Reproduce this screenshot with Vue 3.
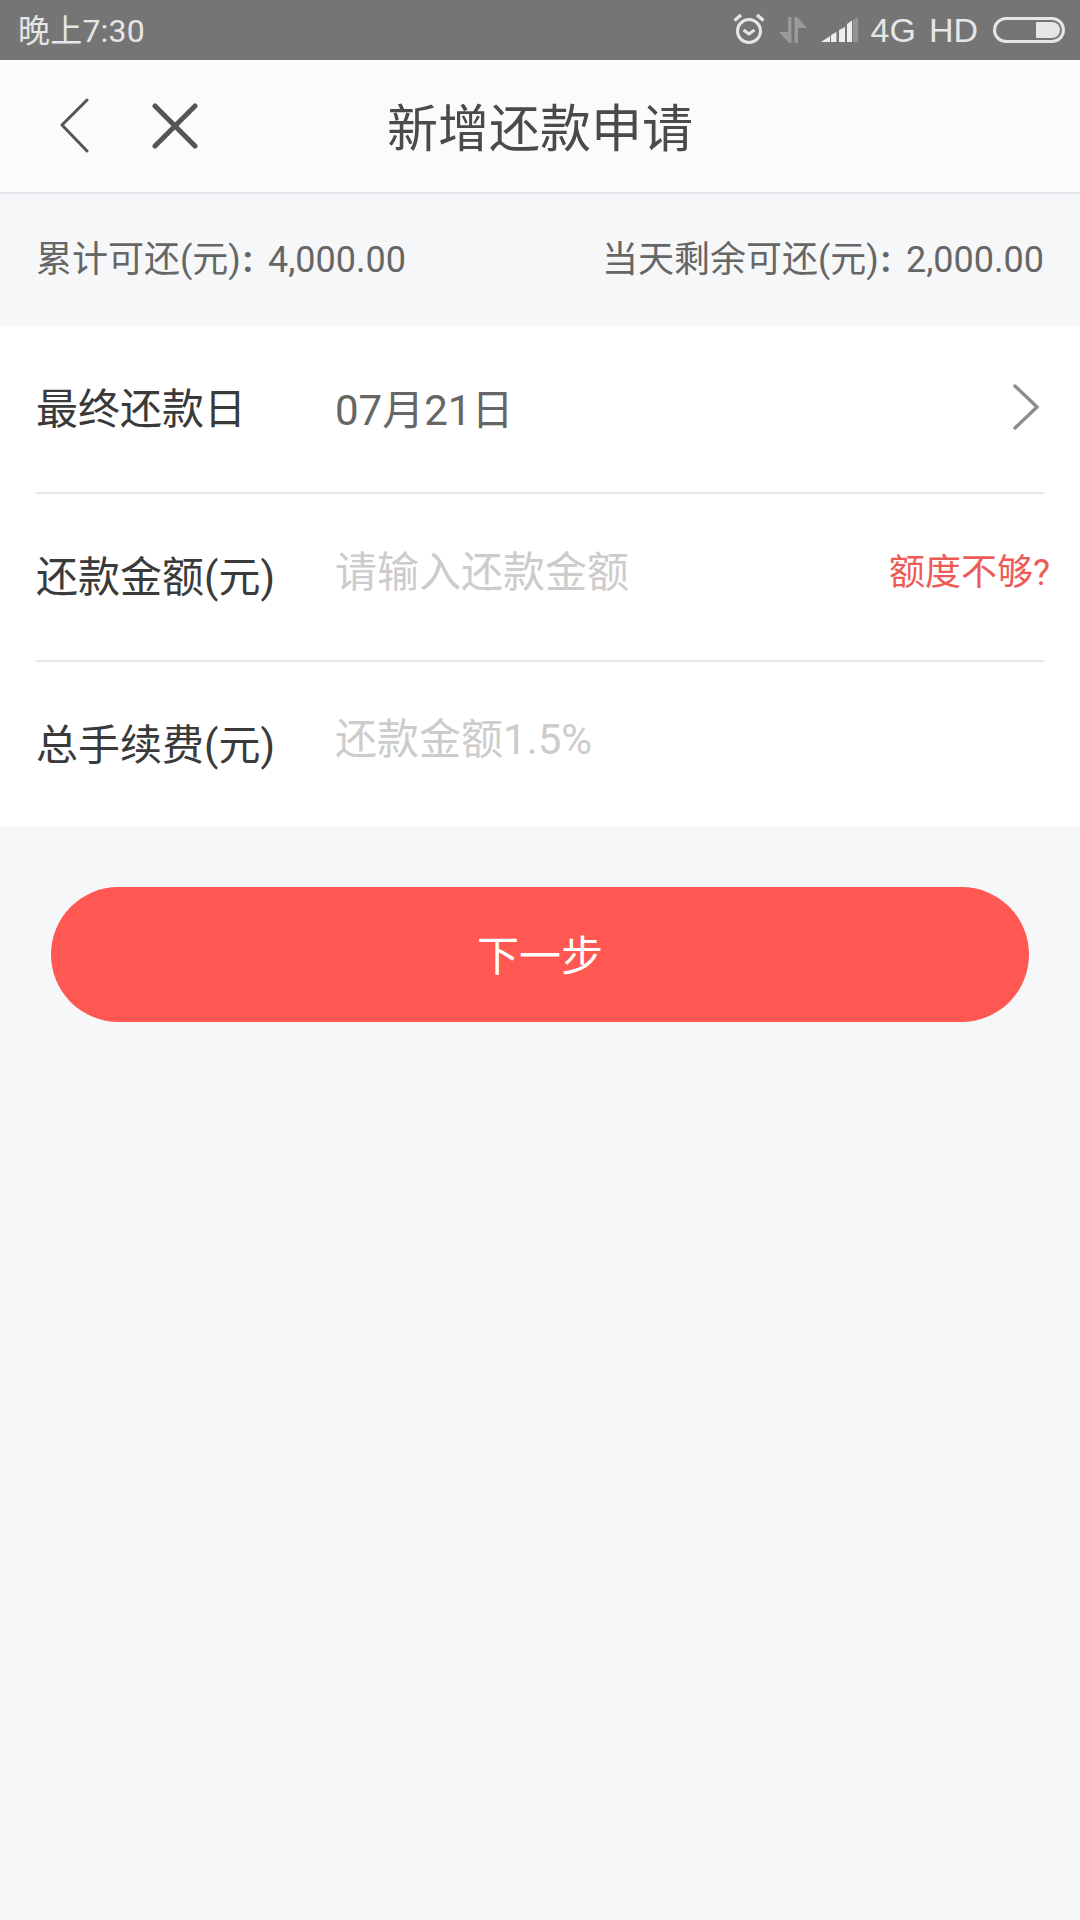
<template>
  <div class="page">
    <div class="status">
      <span class="time">晚上7:30</span>
      <div class="status-right">
        <svg class="alarm" width="32" height="32" viewBox="0 0 32 32" fill="none" stroke="#e6e6e6">
          <circle cx="16" cy="18" r="11.500" stroke-width="3" />
          <path d="M10.500 17l5.500 4 5.500-4" stroke-width="3" />
          <path d="M1.500 7.500L8 2M30.500 7.500L24 2" stroke-width="3.400" />
        </svg>
        <svg class="arrows" width="28" height="26" viewBox="0 0 28 26" fill="#9a9a9a">
          <path d="M9 0h3.500v26H10L0 15h9zM15.500 0H18l10 11h-9v15h-3.500z" />
        </svg>
        <svg class="signal" width="37" height="26" viewBox="0 0 37 26">
          <path d="M0 25l9-6v6zM10 18l5.500-3v10H10zM18 13l6-3v15h-6zM26 7l5-3.500V25h-5z" fill="#eee" />
          <path d="M32 3l5-3v25h-5z" fill="#949494" />
        </svg>
        <span class="net">4G</span>
        <span class="net hd">HD</span>
        <div class="battery"><div class="battery-fill"></div></div>
      </div>
    </div>
    <div class="nav">
      <svg class="back" width="30" height="56" viewBox="0 0 30 56" fill="none" stroke="#555" stroke-width="3" stroke-linecap="round" stroke-linejoin="round">
        <path d="M27 2L2 27l25 26" />
      </svg>
      <svg class="close" width="46" height="46" viewBox="0 0 46 46" fill="none" stroke="#555" stroke-width="5" stroke-linecap="round">
        <path d="M3 3l40 40M43 3L3 43" />
      </svg>
      <span class="title">新增还款申请</span>
    </div>
    <div class="summary">
      <span>累计可还(元)<i class="colon">:</i>4,000.00</span>
      <span>当天剩余可还(元)<i class="colon">:</i>2,000.00</span>
    </div>
    <div class="form">
      <div class="row">
        <span class="label">最终还款日</span>
        <span class="value">07月21日</span>
        <svg class="chev" width="26" height="46" viewBox="0 0 26 46" fill="none" stroke="#8e8e8e" stroke-width="3.500" stroke-linecap="round" stroke-linejoin="round">
          <path d="M2 2l22 21L2 44" />
        </svg>
      </div>
      <div class="row">
        <span class="label">还款金额(元)</span>
        <span class="hint">请输入还款金额</span>
        <span class="link">额度不够?</span>
      </div>
      <div class="row last">
        <span class="label">总手续费(元)</span>
        <span class="hint">还款金额1.5%</span>
      </div>
    </div>
    <div class="action">
      <div class="btn">下一步</div>
    </div>
  </div>
</template>

<script setup>
</script>

<style>
html, body { margin: 0; background: #f6f7f9; }
</style>

<style scoped>
.page {
  width: 1080px;
  height: 1920px;
  display: flex;
  flex-direction: column;
  background: #f6f7f9;
  overflow: hidden;
  font-family: Roboto, "Noto Sans CJK SC", sans-serif;
}
.status {
  height: 60px;
  background: #757575;
  display: flex;
  align-items: center;
  justify-content: space-between;
  padding: 0 15px 0 18px;
  box-sizing: border-box;
  color: #e6e6e6;
}
.time { font-size: 32px; letter-spacing: 0.2px; margin-top: -4px; }
.status-right { display: flex; align-items: center; }
.alarm { margin-right: 14px; margin-top: -2px; }
.arrows { margin-right: 14px; }
.signal { margin-right: 13px; }
.net { font-size: 34px; font-family: "Liberation Sans", sans-serif; line-height: 60px; }
.hd { margin-left: 13px; margin-right: 15px; }
.battery {
  width: 72px;
  height: 26px;
  border: 3px solid #e6e6e6;
  border-radius: 13px;
  box-sizing: border-box;
  display: flex;
  justify-content: flex-end;
  padding: 2px;
}
.battery-fill { width: 24px; background: #e6e6e6; border-radius: 1px 8px 8px 1px; }
.nav {
  height: 134px;
  background: #fbfbfb;
  border-bottom: 2px solid #e3e4e8;
  box-sizing: border-box;
  display: flex;
  align-items: center;
  position: relative;
  padding-left: 60px;
}
.back { margin-right: 62px; }
.title {
  position: absolute;
  left: 0;
  right: 0;
  padding-bottom: 2px;
  text-align: center;
  font-size: 51px;
  color: #4a4a4a;
}
.summary {
  height: 132px;
  padding: 0 36px 8px;
  box-sizing: border-box;
  display: flex;
  align-items: center;
  justify-content: space-between;
  font-size: 36px;
  color: #666;
}
.colon { font-style: normal; font-weight: 700; margin: 0 15px 0 2px; }
.form { background: #fff; padding: 0 36px; height: 501px; display: flex; flex-direction: column; }
.row {
  height: 168px;
  border-bottom: 2px solid #e8e8e8;
  box-sizing: border-box;
  display: flex;
  align-items: center;
  position: relative;
}
.row.last { border-bottom: 0; height: 165px; }
.label { width: 299px; font-size: 42px; color: #3a3a3a; flex: none; margin-top: -7px; }
.value { font-size: 42px; color: #666; flex: 1; margin-top: -6px; }
.hint { font-size: 42px; color: #ccc; flex: 1; margin-top: -18px; }
.link { position: absolute; right: -6px; font-size: 36px; color: #ee5b56; top: 49px; }
.chev { margin-right: 5px; margin-top: -4px; }
.action { padding: 60px 51px 0; }
.btn {
  height: 135px;
  padding-bottom: 4px;
  box-sizing: border-box;
  border-radius: 68px;
  background: #ff5751;
  color: #fff;
  font-size: 42px;
  display: flex;
  align-items: center;
  justify-content: center;
}
</style>
